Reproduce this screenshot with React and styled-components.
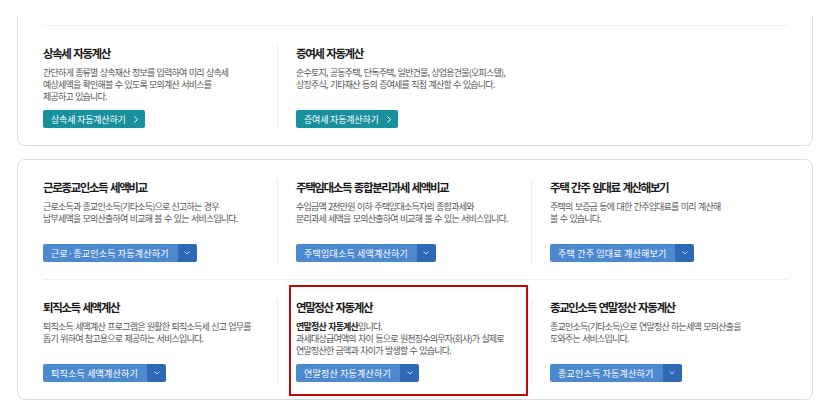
import React from "react";
import styled, { createGlobalStyle } from "styled-components";

const GlobalStyle = createGlobalStyle`
  html, body { margin: 0; padding: 0; background: #ffffff; }
  body {
    font-family: "Noto Sans CJK KR", "Noto Sans", sans-serif;
    color: #333;
  }
`;

const Page = styled.div`
  width: 831px;
  padding: 15px 18px 0 17px;
  box-sizing: border-box;
  display: flex;
  flex-direction: column;
  gap: 13px;
`;

const Card = styled.div`
  border: 1px solid #d6dde5;
  border-top: ${(p) => (p.$cut ? "none" : "1px solid #d6dde5")};
  border-radius: ${(p) => (p.$cut ? "0 0 8px 8px" : "8px")};
  padding: ${(p) => (p.$cut ? "10px" : "0")} 24px 0 25px;
`;

const Row = styled.div`
  display: grid;
  grid-template-columns: 234px 254px 1fr;
  padding: 19px 0 17px;
  border-top: ${(p) => (p.$first ? "none" : "1px solid #eef0f2")};
`;

const Col = styled.div`
  position: relative;
  display: flex;
  flex-direction: column;
  align-items: flex-start;
  padding-right: 12px;

  & + & {
    border-left: 1px solid #e9ebee;
    padding-left: 18px;
  }

  ${(p) =>
    p.$marked &&
    `
    &::after {
      content: "";
      position: absolute;
      top: -14px;
      bottom: -14px;
      left: 11px;
      right: 3px;
      border: 2px solid #b80a0a;
      pointer-events: none;
    }
  `}
`;

const Title = styled.h3`
  margin: 0 0 6px;
  font-size: 11.5px;
  line-height: 16px;
  font-weight: 700;
  letter-spacing: -1.4px;
  word-spacing: 1.5px;
  color: #1a1a1a;
  white-space: nowrap;
`;

const Desc = styled.p`
  margin: 0 0 7px;
  min-height: 36px;
  font-size: 9px;
  line-height: 12px;
  letter-spacing: -0.8px;
  word-spacing: 1px;
  color: #555;
  white-space: nowrap;

  b {
    font-weight: 700;
    color: #222;
  }
`;

const LinkButton = styled.a`
  display: inline-flex;
  align-items: center;
  gap: 8px;
  height: 18px;
  padding: 0 7px 0 8px;
  border-radius: 2px;
  background: #18909d;
  color: #fff;
  font-size: 9px;
  letter-spacing: -0.2px;
  white-space: nowrap;
  text-decoration: none;
`;

const SplitButton = styled.div`
  display: inline-flex;
  height: 18px;
  border-radius: 2px;
  overflow: hidden;
`;

const MainPart = styled.span`
  display: flex;
  align-items: center;
  padding: 0 9px 0 8px;
  background: #4d89d1;
  color: #fff;
  font-size: 9px;
  letter-spacing: 0.2px;
  white-space: nowrap;
`;

const DropPart = styled.span`
  display: flex;
  align-items: center;
  justify-content: center;
  width: 19px;
  background: #2d69b5;
`;

const Chevron = ({ dir }) =>
  dir === "right" ? (
    <svg width="4" height="7" viewBox="0 0 4 7">
      <polyline points="0.5,0.5 3.5,3.5 0.5,6.5" fill="none" stroke="#fff" strokeWidth="1" />
    </svg>
  ) : (
    <svg width="6" height="4" viewBox="0 0 6 4">
      <polyline points="0.5,0.5 3,3 5.5,0.5" fill="none" stroke="#dbe6f5" strokeWidth="0.9" />
    </svg>
  );

const Item = ({ title, lines, button, teal, marked }) => (
  <Col $marked={marked}>
    <Title>{title}</Title>
    <Desc>
      {lines.map((l, i) => (
        <React.Fragment key={i}>
          {i > 0 && <br />}
          {l}
        </React.Fragment>
      ))}
    </Desc>
    {teal ? (
      <LinkButton href="#">
        {button}
        <Chevron dir="right" />
      </LinkButton>
    ) : (
      <SplitButton>
        <MainPart>{button}</MainPart>
        <DropPart>
          <Chevron dir="down" />
        </DropPart>
      </SplitButton>
    )}
  </Col>
);

export default function App() {
  return (
    <>
      <GlobalStyle />
      <Page>
        <Card $cut>
          <Row>
            <Item
              teal
              title="상속세 자동계산"
              lines={[
                "간단하게 종류별 상속재산 정보를 입력하여 미리 상속세",
                "예상세액을 확인해볼 수 있도록 모의계산 서비스를",
                "제공하고 있습니다.",
              ]}
              button="상속세 자동계산하기"
            />
            <Item
              teal
              title="증여세 자동계산"
              lines={[
                "순수토지, 공동주택, 단독주택, 일반건물, 상업용건물(오피스텔),",
                "상장주식, 기타재산 등의 증여세를 직접 계산할 수 있습니다.",
              ]}
              button="증여세 자동계산하기"
            />
          </Row>
        </Card>

        <Card>
          <Row $first>
            <Item
              title="근로종교인소득 세액비교"
              lines={[
                "근로소득과 종교인소득(기타소득)으로 신고하는 경우",
                "납부세액을 모의산출하여 비교해 볼 수 있는 서비스입니다.",
              ]}
              button="근로·종교인소득 자동계산하기"
            />
            <Item
              title="주택임대소득 종합분리과세 세액비교"
              lines={[
                "수입금액 2천만원 이하 주택임대소득자의 종합과세와",
                "분리과세 세액을 모의산출하여 비교해 볼 수 있는 서비스입니다.",
              ]}
              button="주택임대소득 세액계산하기"
            />
            <Item
              title="주택 간주 임대료 계산해보기"
              lines={["주택의 보증금 등에 대한 간주임대료를 미리 계산해", "볼 수 있습니다."]}
              button="주택 간주 임대료 계산해보기"
            />
          </Row>
          <Row>
            <Item
              title="퇴직소득 세액계산"
              lines={[
                "퇴직소득 세액계산 프로그램은 원활한 퇴직소득세 신고 업무를",
                "돕기 위하여 참고용으로 제공하는 서비스입니다.",
              ]}
              button="퇴직소득 세액계산하기"
            />
            <Item
              marked
              title="연말정산 자동계산"
              lines={[
                <>
                  <b>연말정산 자동계산</b>입니다.
                </>,
                "과세대상급여액의 차이 등으로 원천징수의무자(회사)가 실제로",
                "연말정산한 금액과 차이가 발생할 수 있습니다.",
              ]}
              button="연말정산 자동계산하기"
            />
            <Item
              title="종교인소득 연말정산 자동계산"
              lines={[
                "종교인소득(기타소득)으로 연말정산 하는세액 모의산출을",
                "도와주는 서비스입니다.",
              ]}
              button="종교인소득 자동계산하기"
            />
          </Row>
        </Card>
      </Page>
    </>
  );
}
